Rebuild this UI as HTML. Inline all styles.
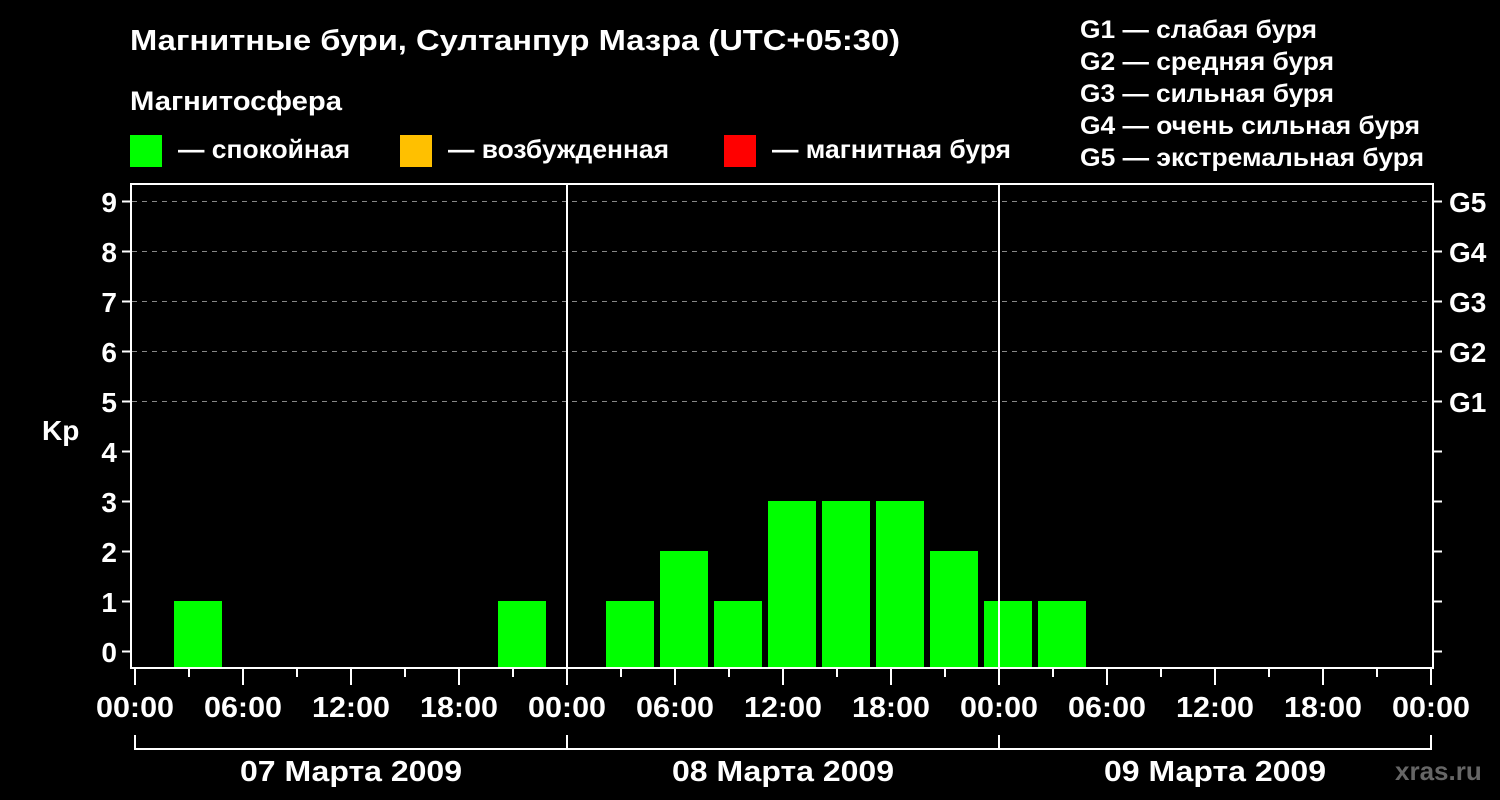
<!DOCTYPE html>
<html><head><meta charset="utf-8"><style>
html,body{margin:0;padding:0;background:#000;}
svg{display:block;}
text{font-family:"Liberation Sans",sans-serif;font-weight:bold;fill:#fff;}
</style></head><body>
<svg width="1500" height="800" viewBox="0 0 1500 800">
<rect width="1500" height="800" fill="#000"/>
<text x="130" y="50" font-size="29" textLength="770" lengthAdjust="spacingAndGlyphs">Магнитные бури, Султанпур Мазра (UTC+05:30)</text>
<text x="130" y="110" font-size="27" textLength="212" lengthAdjust="spacingAndGlyphs">Магнитосфера</text>
<rect x="130" y="135" width="32" height="32" fill="#00ff00"/>
<text x="178" y="158" font-size="26" textLength="172" lengthAdjust="spacingAndGlyphs">— спокойная</text>
<rect x="400" y="135" width="32" height="32" fill="#ffc000"/>
<text x="448" y="158" font-size="26" textLength="221" lengthAdjust="spacingAndGlyphs">— возбужденная</text>
<rect x="724" y="135" width="32" height="32" fill="#ff0000"/>
<text x="772" y="158" font-size="26" textLength="239" lengthAdjust="spacingAndGlyphs">— магнитная буря</text>
<g font-size="25">
<text x="1080" y="38" textLength="237" lengthAdjust="spacingAndGlyphs">G1 — слабая буря</text>
<text x="1080" y="70" textLength="254" lengthAdjust="spacingAndGlyphs">G2 — средняя буря</text>
<text x="1080" y="102" textLength="254" lengthAdjust="spacingAndGlyphs">G3 — сильная буря</text>
<text x="1080" y="134" textLength="340" lengthAdjust="spacingAndGlyphs">G4 — очень сильная буря</text>
<text x="1080" y="166" textLength="344" lengthAdjust="spacingAndGlyphs">G5 — экстремальная буря</text>
</g>
<g stroke="#888" stroke-width="1" stroke-dasharray="5,5">
<line x1="132" y1="201.5" x2="1432" y2="201.5"/>
<line x1="132" y1="251.5" x2="1432" y2="251.5"/>
<line x1="132" y1="301.5" x2="1432" y2="301.5"/>
<line x1="132" y1="351.5" x2="1432" y2="351.5"/>
<line x1="132" y1="401.5" x2="1432" y2="401.5"/>
</g>
<g fill="#00ff00">
<rect x="174" y="601" width="48" height="67"/>
<rect x="498" y="601" width="48" height="67"/>
<rect x="606" y="601" width="48" height="67"/>
<rect x="660" y="551" width="48" height="117"/>
<rect x="714" y="601" width="48" height="67"/>
<rect x="768" y="501" width="48" height="167"/>
<rect x="822" y="501" width="48" height="167"/>
<rect x="876" y="501" width="48" height="167"/>
<rect x="930" y="551" width="48" height="117"/>
<rect x="984" y="601" width="48" height="67"/>
<rect x="1038" y="601" width="48" height="67"/>
</g>
<g stroke="#fff" stroke-width="2" fill="none">
<rect x="131" y="184" width="1302" height="484"/>
<line x1="567" y1="184" x2="567" y2="668"/>
<line x1="999" y1="184" x2="999" y2="668"/>
<path d="M122 201.5h9M122 251.5h9M122 301.5h9M122 351.5h9M122 401.5h9M122 451.5h9M122 501.5h9M122 551.5h9M122 601.5h9M122 651.5h9"/>
<path d="M1433 201.5h9M1433 251.5h9M1433 301.5h9M1433 351.5h9M1433 401.5h9M1433 451.5h9M1433 501.5h9M1433 551.5h9M1433 601.5h9M1433 651.5h9"/>
<path d="M135 669v16M189 669v8M243 669v16M297 669v8M351 669v16M405 669v8M459 669v16M513 669v8M567 669v16M621 669v8M675 669v16M729 669v8M783 669v16M837 669v8M891 669v16M945 669v8M999 669v16M1053 669v8M1107 669v16M1161 669v8M1215 669v16M1269 669v8M1323 669v16M1377 669v8M1431 669v16"/>
<path d="M135 735v15M567 735v15M999 735v15M1431 735v15M135 749h1296"/>
</g>
<g font-size="28" text-anchor="end">
<text x="117" y="212">9</text><text x="117" y="262">8</text><text x="117" y="312">7</text><text x="117" y="362">6</text><text x="117" y="412">5</text><text x="117" y="462">4</text><text x="117" y="512">3</text><text x="117" y="562">2</text><text x="117" y="612">1</text><text x="117" y="662">0</text>
</g>
<text x="42" y="440" font-size="28">Kp</text>
<g font-size="28">
<text x="1449" y="212">G5</text><text x="1449" y="262">G4</text><text x="1449" y="312">G3</text><text x="1449" y="362">G2</text><text x="1449" y="412">G1</text>
</g>
<g font-size="29" text-anchor="middle">
<text x="135" y="717" textLength="78" lengthAdjust="spacingAndGlyphs">00:00</text><text x="243" y="717" textLength="78" lengthAdjust="spacingAndGlyphs">06:00</text><text x="351" y="717" textLength="78" lengthAdjust="spacingAndGlyphs">12:00</text><text x="459" y="717" textLength="78" lengthAdjust="spacingAndGlyphs">18:00</text>
<text x="567" y="717" textLength="78" lengthAdjust="spacingAndGlyphs">00:00</text><text x="675" y="717" textLength="78" lengthAdjust="spacingAndGlyphs">06:00</text><text x="783" y="717" textLength="78" lengthAdjust="spacingAndGlyphs">12:00</text><text x="891" y="717" textLength="78" lengthAdjust="spacingAndGlyphs">18:00</text>
<text x="999" y="717" textLength="78" lengthAdjust="spacingAndGlyphs">00:00</text><text x="1107" y="717" textLength="78" lengthAdjust="spacingAndGlyphs">06:00</text><text x="1215" y="717" textLength="78" lengthAdjust="spacingAndGlyphs">12:00</text><text x="1323" y="717" textLength="78" lengthAdjust="spacingAndGlyphs">18:00</text>
<text x="1431" y="717" textLength="78" lengthAdjust="spacingAndGlyphs">00:00</text>
<text x="351" y="781" textLength="222" lengthAdjust="spacingAndGlyphs">07 Марта 2009</text>
<text x="783" y="781" textLength="222" lengthAdjust="spacingAndGlyphs">08 Марта 2009</text>
<text x="1215" y="781" textLength="222" lengthAdjust="spacingAndGlyphs">09 Марта 2009</text>
</g>
<text x="1395" y="780" font-size="26" style="fill:#666">xras.ru</text>
</svg>
</body></html>
